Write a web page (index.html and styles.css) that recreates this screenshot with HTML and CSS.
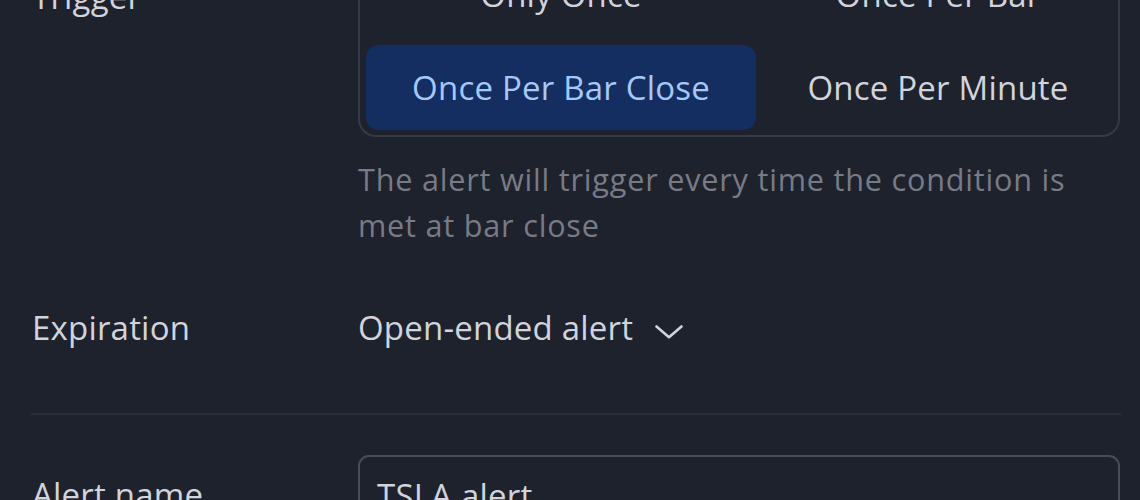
FILE: index.html
```html
<!DOCTYPE html>
<html lang="en">
<head>
<meta charset="utf-8">
<title>Alert settings</title>
<link rel="stylesheet" href="styles.css">
</head>
<body>
<div class="page">
  <div class="row row-trigger">
    <div class="label label-trigger">Trigger</div>
    <div class="control">
      <div class="segmented">
        <button class="seg">Only Once</button>
        <button class="seg">Once Per Bar</button>
        <button class="seg seg-active">Once Per Bar Close</button>
        <button class="seg">Once Per Minute</button>
      </div>
      <p class="hint">The alert will trigger every time the condition is met at bar close</p>
    </div>
  </div>
  <div class="row row-exp">
    <div class="label">Expiration</div>
    <div class="control">
      <button class="dropdown"><span>Open-ended alert</span>
        <svg class="chevron" width="28" height="14" viewBox="0 0 28 14" aria-hidden="true">
          <path d="M1.5 1.5 L14 12.2 L26.5 1.5" fill="none" stroke="#d1d4dc" stroke-width="2.6" stroke-linecap="round" stroke-linejoin="round"/>
        </svg>
      </button>
    </div>
  </div>
  <div class="divider"></div>
  <div class="row row-name">
    <div class="label label-name">Alert name</div>
    <div class="control">
      <div class="input">TSLA alert</div>
    </div>
  </div>
</div>
</body>
</html>
```
FILE: styles.css
```css
html, body {
  margin: 0;
  padding: 0;
  background: #1e222d;
  overflow: hidden;
}

body {
  font-family: "Open Sans", "Noto Sans", sans-serif;
  color: #d1d4dc;
  width: 1140px;
  height: 500px;
}

.page {
  margin-top: -55px;
  margin-left: 31px;
  width: 1090px;
}

.row {
  display: grid;
  grid-template-columns: 327px 762px;
  align-items: start;
}

.label {
  font-size: 33px;
  line-height: 46px;
  letter-spacing: 0.2px;
  color: #d1d4dc;
  padding-left: 1px;
}

.label-trigger {
  padding-top: 29px;
}

.segmented {
  display: grid;
  grid-template-columns: 390px 1fr;
  grid-auto-rows: 85px;
  gap: 8px;
  padding: 5px 6px;
  border: 2px solid #363a45;
  border-radius: 18px;
}

.seg {
  display: flex;
  align-items: center;
  justify-content: center;
  border: 0;
  margin: 0;
  padding: 0;
  background: transparent;
  font-family: inherit;
  font-size: 33px;
  line-height: 46px;
  letter-spacing: 0.2px;
  color: #d1d4dc;
  border-radius: 13px;
}

.seg-active {
  background: #142e61;
  color: #a6c8f7;
}

.hint {
  margin: 19px 0 0;
  max-width: 725px;
  font-size: 30.6px;
  line-height: 46px;
  letter-spacing: 0.8px;
  color: #787b86;
}

.row-exp {
  margin-top: 57px;
}

.dropdown {
  display: inline-flex;
  align-items: center;
  gap: 22px;
  border: 0;
  margin: 0;
  padding: 0;
  background: transparent;
  font-family: inherit;
  font-size: 33px;
  line-height: 46px;
  letter-spacing: 0.2px;
  color: #d1d4dc;
}

.chevron {
  margin-top: 7px;
  display: block;
}

.divider {
  margin-top: 62px;
  height: 2px;
  background: #2a2e39;
}

.row-name {
  margin-top: 40px;
}

.label-name {
  padding-top: 17px;
}

.input {
  border: 2px solid #4a4d58;
  border-radius: 11px;
  padding: 16px 17px;
  font-size: 33px;
  line-height: 46px;
  letter-spacing: 0.2px;
  color: #d1d4dc;
}
```
